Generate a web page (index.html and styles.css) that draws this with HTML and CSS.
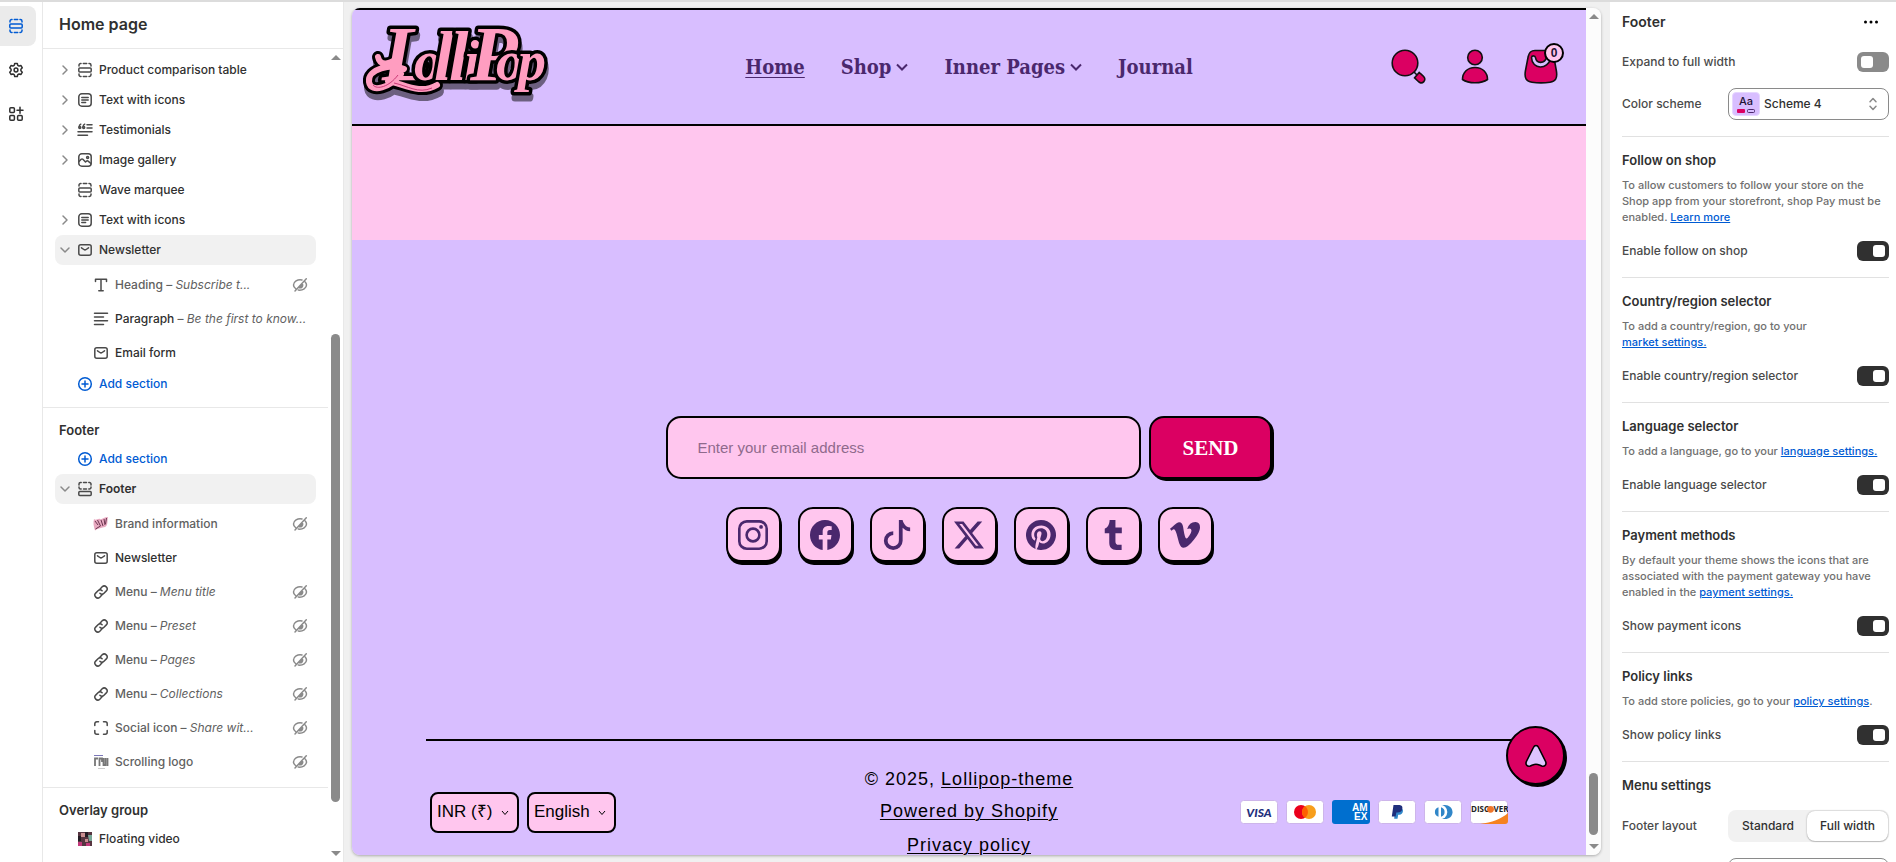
FILE: index.html
```html
<!DOCTYPE html>
<html lang="en">
<head>
<meta charset="utf-8">
<title>Home page - Theme editor</title>
<link rel="stylesheet" href="styles.css">
</head>
<body>
<svg class="sprite" aria-hidden="true">
  <symbol id="i-section" viewBox="0 0 16 16"><path d="M2 4V3.200A1.700 1.700 0 0 1 3.700 1.500H4M6.300 1.500h3.400M12 1.500h.3A1.700 1.700 0 0 1 14 3.200V4M2 12v.8a1.700 1.700 0 0 0 1.700 1.700H4M6.300 14.500h3.400M12 14.500h.3a1.700 1.700 0 0 0 1.700-1.700V12"/><rect x="1.800" y="6" width="12.400" height="4" rx="1"/></symbol>
  <symbol id="i-text" viewBox="0 0 16 16"><rect x="1.800" y="1.800" width="12.400" height="12.400" rx="3"/><path d="M4.800 5.500h6.400M4.800 8h6.400M4.800 10.500h3.800"/></symbol>
  <symbol id="i-quote" viewBox="0 0 16 16"><path d="M10 2.800h5M10 6h5M1 9.800h14M1 13.300h9.500"/><path d="M3.800 2.200c-1.200.6-1.600 1.600-1.600 2.800M7.700 2.200c-1.200.6-1.600 1.600-1.600 2.800"/><circle cx="2.800" cy="5.500" r="1"/><circle cx="6.700" cy="5.500" r="1"/></symbol>
  <symbol id="i-image" viewBox="0 0 16 16"><rect x="1.800" y="1.800" width="12.400" height="12.400" rx="3"/><path d="M2 9.500l2.200-2.200a1.200 1.200 0 0 1 1.700 0L8.500 10l1-.9a1.200 1.200 0 0 1 1.600 0l2.800 2.400"/><circle cx="10.600" cy="5.400" r="1"/></symbol>
  <symbol id="i-mail" viewBox="0 0 16 16"><rect x="1.800" y="2.800" width="12.400" height="10.400" rx="2"/><path d="M4.500 5.800l2.400 1.700a1.900 1.900 0 0 0 2.200 0l2.400-1.700"/></symbol>
  <symbol id="i-heading" viewBox="0 0 16 16"><path d="M2.500 4.500V2.300h11v2.200M8 2.500v11M5.800 13.700h4.400"/></symbol>
  <symbol id="i-para" viewBox="0 0 16 16"><path d="M1.500 2.300h13M1.500 6h9M1.500 9.800h13M1.500 13.500h9"/></symbol>
  <symbol id="i-plus" viewBox="0 0 16 16"><circle cx="8" cy="8" r="6.300"/><path d="M8 5v6M5 8h6"/></symbol>
  <symbol id="i-footer" viewBox="0 0 16 16"><path d="M2 4V3a1.500 1.500 0 0 1 1.500-1.500h.7M6.500 1.500h3M11.800 1.500h.7A1.500 1.500 0 0 1 14 3v1M2 6v.5A1.500 1.500 0 0 0 3.500 8h.7M6.500 8h3M11.800 8h.7A1.500 1.500 0 0 0 14 6.500V6"/><rect x="1.800" y="10.500" width="12.400" height="4" rx="1"/></symbol>
  <symbol id="i-link" viewBox="0 0 16 16"><path d="M6.700 5.400l2.500-2.600a2.900 2.900 0 0 1 4.100 4.100L11 9.200a2.900 2.900 0 0 1-4.100 0"/><path d="M9.300 10.600l-2.500 2.600a2.900 2.900 0 0 1-4.100-4.100L5 6.800a2.900 2.900 0 0 1 4.100 0"/></symbol>
  <symbol id="i-corners" viewBox="0 0 16 16"><path d="M1.800 5.500V3.800a2 2 0 0 1 2-2h1.700M10.500 1.800h1.700a2 2 0 0 1 2 2v1.700M14.200 10.500v1.700a2 2 0 0 1-2 2h-1.700M5.500 14.200H3.800a2 2 0 0 1-2-2v-1.700"/></symbol>
  <symbol id="i-hidden" viewBox="0 0 16 16"><path d="M10 2.900C5.500 1.800 1.500 5 1.500 8c0 1.400.8 2.600 2 3.500M14.300 1.800L3 14M13.200 5c.8.900 1.300 1.900 1.300 3 0 2.800-3.500 5.700-8.200 5.100M10.600 7.500a2.600 2.600 0 0 1-3.300 3.200z"/></symbol>
  <symbol id="i-right" viewBox="0 0 16 16"><path d="M6 4l4 4-4 4"/></symbol>
  <symbol id="i-down" viewBox="0 0 16 16"><path d="M4 6l4 4 4-4"/></symbol>
</svg>

<div class="editor">
  <nav class="rail" aria-label="Editor areas">
    <button class="rail-btn is-active" aria-label="Sections"><svg class="ic"><use href="#i-section"/></svg></button>
    <button class="rail-btn" aria-label="Theme settings"><svg class="ic" viewBox="0 0 16 16"><path d="M6.700 1.500h2.600l.5 1.900 1.300.7 1.900-.5 1.300 2.200L12.900 7.200v1.600l1.400 1.400-1.300 2.200-1.900-.5-1.300.7-.5 1.900H6.700l-.5-1.900-1.300-.7-1.900.5-1.300-2.200 1.400-1.400V7.200L1.700 5.800 3 3.600l1.900.5 1.300-.7z"/><circle cx="8" cy="8" r="1.900"/></svg></button>
    <button class="rail-btn" aria-label="App embeds"><svg class="ic" viewBox="0 0 16 16"><rect x="1.800" y="1.800" width="4.600" height="4.600" rx="1"/><rect x="1.800" y="9.600" width="4.600" height="4.600" rx="1"/><rect x="9.600" y="9.600" width="4.600" height="4.600" rx="1"/><path d="M12 1.200v6M9 4.200h6"/></svg></button>
  </nav>

  <aside class="outline">
    <h1 class="outline-title">Home page</h1>
    <div class="outline-body">
      <div class="tree">
        <section class="group">
          <button class="row"><svg class="ic chev"><use href="#i-right"/></svg><svg class="ic"><use href="#i-section"/></svg><span>Product comparison table</span></button>
          <button class="row"><svg class="ic chev"><use href="#i-right"/></svg><svg class="ic"><use href="#i-text"/></svg><span>Text with icons</span></button>
          <button class="row"><svg class="ic chev"><use href="#i-right"/></svg><svg class="ic"><use href="#i-quote"/></svg><span>Testimonials</span></button>
          <button class="row"><svg class="ic chev"><use href="#i-right"/></svg><svg class="ic"><use href="#i-image"/></svg><span>Image gallery</span></button>
          <button class="row"><span class="chev"></span><svg class="ic"><use href="#i-section"/></svg><span>Wave marquee</span></button>
          <button class="row"><svg class="ic chev"><use href="#i-right"/></svg><svg class="ic"><use href="#i-text"/></svg><span>Text with icons</span></button>
          <button class="row is-open"><svg class="ic chev"><use href="#i-down"/></svg><svg class="ic"><use href="#i-mail"/></svg><span>Newsletter</span></button>
          <div class="children">
            <button class="row child is-hidden"><svg class="ic"><use href="#i-heading"/></svg><span>Heading – <em>Subscribe t...</em></span><svg class="ic eye"><use href="#i-hidden"/></svg></button>
            <button class="row child"><svg class="ic"><use href="#i-para"/></svg><span>Paragraph <i>– <em>Be the first to know...</em></i></span></button>
            <button class="row child"><svg class="ic"><use href="#i-mail"/></svg><span>Email form</span></button>
          </div>
          <button class="row add"><span class="chev"></span><svg class="ic"><use href="#i-plus"/></svg><span>Add section</span></button>
        </section>
        <section class="group">
          <h2 class="group-title">Footer</h2>
          <button class="row add"><span class="chev"></span><svg class="ic"><use href="#i-plus"/></svg><span>Add section</span></button>
          <button class="row is-open is-current"><svg class="ic chev"><use href="#i-down"/></svg><svg class="ic"><use href="#i-footer"/></svg><span>Footer</span></button>
          <div class="children">
            <button class="row child is-hidden"><svg class="thumb-pic" viewBox="0 0 16 16"><path d="M1 3c2 2 4-1 6 0s4-2 8-2c-1 4 .500 8-3 10-3 1-7 1-10 3.500C.500 10 0 7 1 3z" fill="#e8a9c0"/><path d="M2 5l3 4M4.500 4l3 6M8 4l2 6M11 3l1 6M13.500 2l-1 6M2.500 13l5-3" stroke="#6b3550"/></svg><span>Brand information</span><svg class="ic eye"><use href="#i-hidden"/></svg></button>
            <button class="row child"><svg class="ic"><use href="#i-mail"/></svg><span>Newsletter</span></button>
            <button class="row child is-hidden"><svg class="ic"><use href="#i-link"/></svg><span>Menu – <em>Menu title</em></span><svg class="ic eye"><use href="#i-hidden"/></svg></button>
            <button class="row child is-hidden"><svg class="ic"><use href="#i-link"/></svg><span>Menu – <em>Preset</em></span><svg class="ic eye"><use href="#i-hidden"/></svg></button>
            <button class="row child is-hidden"><svg class="ic"><use href="#i-link"/></svg><span>Menu – <em>Pages</em></span><svg class="ic eye"><use href="#i-hidden"/></svg></button>
            <button class="row child is-hidden"><svg class="ic"><use href="#i-link"/></svg><span>Menu – <em>Collections</em></span><svg class="ic eye"><use href="#i-hidden"/></svg></button>
            <button class="row child is-hidden"><svg class="ic"><use href="#i-corners"/></svg><span>Social icon – <em>Share wit...</em></span><svg class="ic eye"><use href="#i-hidden"/></svg></button>
            <button class="row child is-hidden"><svg class="thumb-pic" viewBox="0 0 16 16"><path d="M1 1.500h9" stroke="#7b77b8"/><path d="M2 12V4.500h3M6.500 12V4.500H9V8M10.500 4v7h2V4M14.500 4v8" stroke="#777" stroke-width="1.800" fill="none"/><path d="M5 14.500h7" stroke="#ccc"/></svg><span>Scrolling logo</span><svg class="ic eye"><use href="#i-hidden"/></svg></button>
          </div>
        </section>
        <section class="group">
          <h2 class="group-title">Overlay group</h2>
          <button class="row"><span class="chev"></span><svg class="thumb-pic" viewBox="0 0 16 16"><path fill="#573541" d="M1 1h14v14H1z"/><path fill="#c98f91" d="M4 2h4v4H4zM8 8h3v3H8z"/><path fill="#79a899" d="M11 4h4v6h-3z"/><path fill="#c3397b" d="M1 11h4v4H1zM9 12h4v3H9z"/><path fill="#231c24" d="M1 5h3v5H1zM8 1h3v5H8z"/></svg><span>Floating video</span></button>
        </section>
      </div>
      <div class="scroll scroll-outline" aria-hidden="true"><i class="up"></i><i class="track"><b></b></i><i class="down"></i></div>
    </div>
  </aside>

  <main class="preview">
    <div class="store">
      <header class="store-head">
        <a class="logo" href="#" aria-label="LolliPop">
          <svg viewBox="0 0 184 88" role="img">
            <g class="logo-ink">
              <path class="swash-edge" d="M14 34c2 10 12 7 20 1M40 46C28 40 3 46 5 59c2 12 22 5 32-8M24 58c16 3 32 14 49 4"/>
              <text class="logo-text" y="57"><tspan class="big" x="18">L</tspan><tspan x="50">o</tspan><tspan class="tall" x="70">l</tspan><tspan class="tall" x="85">l</tspan><tspan x="100">i</tspan><tspan class="big" x="106">P</tspan><tspan x="132">o</tspan><tspan x="154">p</tspan></text>
              <path class="swash" d="M14 34c2 10 12 7 20 1M40 46C28 40 3 46 5 59c2 12 22 5 32-8M24 58c16 3 32 14 49 4"/>
              <path class="shine" d="M9 62c4 5 16 2 25-10M30 60c14 3 24 11 38 5"/>
            </g>
          </svg>
        </a>
        <nav class="store-nav">
          <a class="is-here" href="#">Home</a>
          <a href="#">Shop<svg viewBox="0 0 12 8"><path d="M1 1.500l5 5 5-5"/></svg></a>
          <a href="#">Inner Pages<svg viewBox="0 0 12 8"><path d="M1 1.500l5 5 5-5"/></svg></a>
          <a href="#">Journal</a>
        </nav>
        <div class="store-tools">
          <button aria-label="Search"><svg viewBox="0 0 36 36"><path d="M22 22l6 6" fill="none"/><circle cx="14" cy="14" r="12.800"/><path d="M23.600 28.800l4.600-5.300c1.600 1.600 4.600 3.400 5.500 5.800.8 2.600-1.700 4.800-4 4.600-2.300-.5-4.100-3.400-6.100-5.100z"/></svg></button>
          <button aria-label="Account"><svg viewBox="0 0 36 36"><circle cx="18" cy="8.500" r="7.300"/><path d="M18 18.500c8 0 12.500 5.500 12.500 12-6 4.300-19 4.300-25 0 0-6.500 4.500-12 12.500-12z"/></svg></button>
          <button class="bag" aria-label="Cart"><svg viewBox="0 0 36 36"><path d="M12 1.500h12.500c4 0 5.500 2 6.300 6l2.600 14.500c1.200 7.500-1 10.500-6.400 11.300-6 .8-12 .8-18 0-5.600-.8-7.800-3.800-6.600-11.300l2.800-14.500c.8-4 2.300-6 6.800-6z"/><path class="hole" d="M8.500 8.500c.3-2.200 3.600-2.200 4 .2 1 6.300 9.300 6.300 11-.5l4 1.300c-2.500 11.500-18.500 11.500-19-1z"/></svg><span class="count">0</span></button>
        </div>
      </header>
      <div class="band"></div>
      <footer class="store-foot">
        <form class="signup">
          <input type="email" aria-label="Email address" placeholder="Enter your email address">
          <button type="button">SEND</button>
        </form>
        <div class="social">
          <a href="#" aria-label="Instagram"><svg viewBox="0 0 16 16"><rect x=".7" y=".7" width="14.600" height="14.600" rx="4" fill="none" stroke="currentColor" stroke-width="1.400"/><circle cx="8" cy="8" r="3.400" fill="none" stroke="currentColor" stroke-width="1.400"/><circle cx="12.300" cy="3.700" r="1"/></svg></a>
          <a href="#" aria-label="Facebook"><svg viewBox="0 0 16 16"><path d="M16 8.049c0-4.446-3.582-8.050-8-8.050C3.580 0-.002 3.603-.002 8.050c0 4.017 2.926 7.347 6.750 7.951v-5.625h-2.030V8.050H6.750V6.275c0-2.017 1.195-3.131 3.022-3.131.876 0 1.791.157 1.791.157v1.980h-1.009c-.993 0-1.303.621-1.303 1.258v1.510h2.218l-.354 2.326H9.250V16c3.824-.604 6.750-3.934 6.750-7.951"/></svg></a>
          <a href="#" aria-label="TikTok"><svg viewBox="0 0 16 16"><path d="M9 0h1.980c.144.715.54 1.617 1.235 2.512C12.895 3.389 13.797 4 15 4v2c-1.753 0-3.070-.814-4-1.829V11a5 5 0 1 1-5-5v2a3 3 0 1 0 3 3z"/></svg></a>
          <a href="#" aria-label="X"><svg viewBox="0 0 16 16"><path d="M12.600.75h2.454l-5.360 6.142L16 15.250h-4.937l-3.867-5.070-4.425 5.070H.316l5.733-6.570L0 .75h5.063l3.495 4.633L12.601.75Zm-.86 13.028h1.360L4.323 2.145H2.865z"/></svg></a>
          <a href="#" aria-label="Pinterest"><svg viewBox="0 0 16 16"><path d="M8 0a8 8 0 0 0-2.915 15.452c-.07-.633-.134-1.606.027-2.297.146-.625.938-3.977.938-3.977s-.239-.479-.239-1.187c0-1.113.645-1.943 1.448-1.943.682 0 1.012.512 1.012 1.127 0 .686-.437 1.712-.663 2.663-.188.796.4 1.446 1.185 1.446 1.422 0 2.515-1.500 2.515-3.664 0-1.915-1.377-3.254-3.342-3.254-2.276 0-3.612 1.707-3.612 3.471 0 .688.265 1.425.595 1.826a.24.24 0 0 1 .056.23c-.061.252-.196.796-.222.907-.035.146-.116.177-.268.107-1-.465-1.624-1.926-1.624-3.100 0-2.523 1.834-4.840 5.286-4.840 2.775 0 4.932 1.977 4.932 4.620 0 2.757-1.739 4.976-4.151 4.976-.811 0-1.573-.421-1.834-.919l-.498 1.902c-.181.695-.669 1.566-.995 2.097A8 8 0 1 0 8 0"/></svg></a>
          <a href="#" aria-label="Tumblr"><svg viewBox="0 0 16 16"><path d="M6.200 0h3.100v4h3.400v3.100H9.300v4.300c0 1.300.6 1.800 1.700 1.800h1.600V16H9.800C7.300 16 6 14.500 6 12V7.100H3.600V4.600C5.300 4 6.100 2.200 6.200 0z"/></svg></a>
          <a href="#" aria-label="Vimeo"><svg viewBox="0 0 16 16"><path d="M15.992 4.204q-.106 2.334-3.262 6.393-3.263 4.243-5.522 4.243-1.400 0-2.367-2.583L3.550 7.523Q2.830 4.939 2.007 4.940q-.178.001-1.254.754L0 4.724a210 210 0 0 0 2.334-2.081q1.581-1.364 2.373-1.437 1.865-.185 2.298 2.553.466 2.952.646 3.666.54 2.447 1.186 2.445.5 0 1.508-1.587 1.006-1.587 1.077-2.415.144-1.370-1.077-1.370a3 3 0 0 0-1.185.261q1.183-3.860 4.508-3.756 2.466.075 2.324 3.200z"/></svg></a>
        </div>
        <div class="legal">
          <div class="locales">
            <div class="locale"><select aria-label="Currency"><option>INR (₹)</option></select><svg viewBox="0 0 8 6"><path d="M1 1l3 3.500L7 1"/></svg></div>
            <div class="locale"><select aria-label="Language"><option>English</option></select><svg viewBox="0 0 8 6"><path d="M1 1l3 3.500L7 1"/></svg></div>
          </div>
          <div class="credits">
            <p>© 2025, <a href="#">Lollipop-theme</a></p>
            <p><a href="#">Powered by Shopify</a></p>
            <p class="policy"><a href="#">Privacy policy</a></p>
          </div>
          <div class="cards">
            <svg viewBox="0 0 38 24" role="img" aria-label="Visa"><rect class="card" x=".5" y=".5" width="37" height="23" rx="3"/><text x="19" y="16.500" text-anchor="middle" class="visa">VISA</text></svg>
            <svg viewBox="0 0 38 24" role="img" aria-label="Mastercard"><rect class="card" x=".5" y=".5" width="37" height="23" rx="3"/><circle cx="15" cy="12" r="7" fill="#eb001b"/><circle cx="23" cy="12" r="7" fill="#f79e1b"/><path fill="#ff5f00" d="M19 6.300a7 7 0 0 1 0 11.400 7 7 0 0 1 0-11.400z"/></svg>
            <svg viewBox="0 0 38 24" role="img" aria-label="American Express"><rect x="0" y="0" width="38" height="24" rx="3" fill="#006fcf"/><text class="amex" x="20" y="11">AM</text><text class="amex" x="22" y="20">EX</text></svg>
            <svg viewBox="0 0 38 24" role="img" aria-label="PayPal"><rect class="card" x=".5" y=".5" width="37" height="23" rx="3"/><path fill="#3086c8" d="M17 8h6c2.500 1 2.200 3.300 1.500 4.800-.8 1.700-2.600 2-4.300 2l-.7 4h-3.300z"/><path fill="#1f2f7c" d="M15.500 5h6c2.700.2 3.200 2 2.800 4-.5 2.600-2.400 3.500-5 3.500h-1l-.7 4h-3.800z"/></svg>
            <svg viewBox="0 0 38 24" role="img" aria-label="Diners Club"><rect class="card" x=".5" y=".5" width="37" height="23" rx="3"/><path fill="#3086c8" d="M17 5h4c4 0 7.500 3 7.500 7.200S25 19 21 19h-4z"/><circle cx="16" cy="12" r="7.300" fill="#fff"/><path fill="#3086c8" d="M14.500 7.200v9.600a5 5 0 0 1 0-9.600zM17 7.200a5 5 0 0 1 0 9.600z"/></svg>
            <svg viewBox="0 0 38 24" role="img" aria-label="Discover"><rect class="card" x=".5" y=".5" width="37" height="23" rx="3"/><path fill="#f58220" d="M38 13v8a3 3 0 0 1-3 3H10c12-1.500 21-5 28-11z"/><text class="disc" x="1" y="12">DISC</text><circle cx="20.500" cy="9.300" r="3.400" fill="#f0762b"/><text class="disc" x="23.500" y="12">VER</text></svg>
          </div>
        </div>
      </footer>
      <button class="to-top" aria-label="Back to top"><svg viewBox="0 0 24 24"><path d="M12 1.500c1.300 0 2 .7 2.600 2l7 14c1.300 3-.8 5.300-3.800 4.500-2-.7-3.800-1.800-5.800-1.800S8.200 21.300 6.200 22c-3 .8-5.100-1.500-3.800-4.500l7-14c.6-1.300 1.300-2 2.600-2z"/></svg></button>
    </div>
    <div class="scroll scroll-store" aria-hidden="true"><i class="up"></i><i class="track"><b></b></i><i class="down"></i></div>
  </main>

  <aside class="settings">
    <header class="settings-head"><h2>Footer</h2><button aria-label="More actions"><svg viewBox="0 0 16 4"><circle cx="2.500" cy="2" r="1.500"/><circle cx="8" cy="2" r="1.500"/><circle cx="13.500" cy="2" r="1.500"/></svg></button></header>
    <section>
      <div class="field"><label for="expand">Expand to full width</label><input class="toggle" type="checkbox" id="expand"></div>
      <div class="field"><label for="scheme">Color scheme</label>
        <div class="picker"><select id="scheme"><option>Scheme 4</option></select>
          <span class="swatch">Aa<svg viewBox="0 0 18 4"><rect width="8" height="4" rx="1" fill="#db0062"/><rect x="10.500" y=".5" width="7" height="3" rx="1" fill="none" stroke="#4a286d"/></svg></span>
          <svg class="sorter" viewBox="0 0 10 14"><path d="M2 4.800l3-3.200 3 3.200M2 9.200l3 3.200 3-3.200"/></svg></div></div>
    </section>
    <section>
      <h3>Follow on shop</h3>
      <p>To allow customers to follow your store on the Shop app from your storefront, shop Pay must be enabled. <a href="#">Learn more</a></p>
      <div class="field"><label for="follow">Enable follow on shop</label><input class="toggle" type="checkbox" id="follow" checked></div>
    </section>
    <section>
      <h3>Country/region selector</h3>
      <p>To add a country/region, go to your <br><a href="#">market settings.</a></p>
      <div class="field"><label for="country">Enable country/region selector</label><input class="toggle" type="checkbox" id="country" checked></div>
    </section>
    <section>
      <h3>Language selector</h3>
      <p>To add a language, go to your <a href="#">language settings.</a></p>
      <div class="field"><label for="language">Enable language selector</label><input class="toggle" type="checkbox" id="language" checked></div>
    </section>
    <section>
      <h3>Payment methods</h3>
      <p>By default your theme shows the icons that are associated with the payment gateway you have enabled in the <a href="#">payment settings.</a></p>
      <div class="field"><label for="payment">Show payment icons</label><input class="toggle" type="checkbox" id="payment" checked></div>
    </section>
    <section>
      <h3>Policy links</h3>
      <p>To add store policies, go to your <a href="#">policy settings</a>.</p>
      <div class="field"><label for="policy">Show policy links</label><input class="toggle" type="checkbox" id="policy" checked></div>
    </section>
    <section>
      <h3>Menu settings</h3>
      <div class="field"><span>Footer layout</span>
        <div class="segment" role="radiogroup" aria-label="Footer layout">
          <label><input type="radio" name="layout"><span>Standard</span></label>
          <label><input type="radio" name="layout" checked><span>Full width</span></label>
        </div></div>
      <div class="field"><span></span><div class="picker"><select aria-label="Menu"><option></option></select></div></div>
    </section>
  </aside>
</div>
</body>
</html>
```

FILE: styles.css
```css
* { box-sizing: border-box; }

body {
  margin: 0;
  font: 450 12px/20px Inter, "Liberation Sans", sans-serif;
  color: #303030;
  background: #f0f0f0;
}

h1, h2, h3, p { margin: 0; }

button, input, select {
  font: inherit;
  color: inherit;
  margin: 0;
}

button {
  background: none;
  border: 0;
  padding: 0;
  display: flex;
  align-items: center;
}

svg { display: block; flex: none; }

.sprite { position: absolute; width: 0; height: 0; }

.ic {
  width: 16px;
  height: 16px;
  fill: none;
  stroke: currentColor;
  stroke-width: 1.5;
  stroke-linecap: round;
  stroke-linejoin: round;
}

.editor {
  display: grid;
  grid-template-columns: 43px 301px 1fr 286px;
  height: 100vh;
  overflow: hidden;
  border-top: 2px solid #dcdcdc;
}

/* Icon rail */
.rail {
  display: flex;
  flex-direction: column;
  gap: 4px;
  padding: 4px 6px 0 0;
  background: #fff;
  border-right: 1px solid #e8e8e8;
}

.rail-btn {
  height: 40px;
  padding-left: 8px;
  border-radius: 0 8px 8px 0;
}

.rail-btn.is-active { background: #ebebeb; color: #005bd3; }

/* Section outline */
.outline {
  display: flex;
  flex-direction: column;
  min-height: 0;
  background: #fff;
  border-right: 1px solid #e8e8e8;
}

.outline-title {
  padding: 12px 16px 14px;
  font-size: 16px;
  font-weight: 600;
  border-bottom: 1px solid #e8e8e8;
}

.outline-body {
  display: flex;
  flex: 1;
  min-height: 0;
}

.tree { flex: 1; padding-top: 6px; overflow: hidden; }

.group { padding: 0 12px 8px; }

.group + .group { border-top: 1px solid #e8e8e8; padding-top: 8px; }

.group-title {
  padding-left: 4px;
  font-size: 13px;
  font-weight: 600;
  line-height: 28px;
}

.row {
  width: 100%;
  height: 30px;
  gap: 6px;
  border-radius: 8px;
  white-space: nowrap;
  text-align: left;
}

.row .ic { color: #4a4a4a; }
.row .chev { width: 16px; flex: none; color: #8a8a8a; margin-left: 2px; margin-right: -2px; }
.row.is-open { background: #f1f1f1; }
.row.is-current { font-weight: 600; }
.row.add, .row.add .ic { color: #005bd3; }

.children { padding-top: 3px; }
.children:not(:last-child) { margin-bottom: -1px; }

.row.child { height: 34px; padding: 0 8px 0 38px; }
.row i { font-style: normal; color: #616161; }
.row.is-hidden { color: #616161; }
.row .eye { margin-left: auto; color: #8a8a8a; }

.thumb-pic { width: 16px; height: 16px; fill: none; }

/* Scrollbars */
.scroll {
  display: flex;
  flex-direction: column;
  align-items: center;
  flex: none;
  width: 15px;
  gap: 5px;
  padding: 6px 0;
}

.up, .down { border: 5px solid transparent; }
.up { border-top: 0; border-bottom-color: #8a8a8a; }
.down { border-bottom: 0; border-top-color: #8a8a8a; }

.track { display: flex; flex-direction: column; flex: 1; }
.track::before, .track::after { content: ""; }
.track b { width: 9px; border-radius: 5px; background: #8a8a8a; }
.scroll-outline .track::before { flex: 269; }
.scroll-outline .track b { flex: 468; }
.scroll-outline .track::after { flex: 44; }
.scroll-store { background: #fcfcfc; }
.scroll-store .track::before { flex: 749; }
.scroll-store .track b { flex: 62; }
.scroll-store .track::after { flex: 4; }

/* Storefront preview */
.preview {
  display: flex;
  min-width: 0;
  min-height: 0;
  margin: 6px 9px 7px 8px;
  border-radius: 8px;
  overflow: hidden;
  box-shadow: 0 1px 3px rgba(0, 0, 0, .3);
}

.store {
  position: relative;
  flex: 1;
  overflow: hidden;
  background: #d8beff;
  color: #000;
  font: 400 17px/32px "Liberation Sans", Arial, sans-serif;
}

.store a { color: inherit; }

.store-head {
  display: grid;
  grid-template-columns: 1fr auto 1fr;
  align-items: center;
  height: 118px;
  padding: 0 12px;
  border: solid #000;
  border-width: 2px 0;
  color: #4a286d;
}

.logo svg { width: 184px; height: 88px; overflow: visible; }
.logo-ink { filter: drop-shadow(1px 6px 0 rgba(0, 0, 0, .5)); }
.logo-text {
  font: italic 700 56px "Liberation Serif", serif;
  fill: #ff9dc0;
  stroke: #000;
  stroke-width: 7px;
  stroke-linejoin: round;
  paint-order: stroke;
}
.logo-text .big { font-size: 78px; }
.logo-text .tall { font-size: 70px; }
.swash-edge, .swash { fill: none; stroke-linecap: round; stroke: #000; stroke-width: 12; }
.swash { stroke: #ff9dc0; stroke-width: 6; }
.shine { fill: none; stroke: #c93a76; stroke-width: 1; }

.store-nav {
  display: flex;
  gap: 36px;
  font: 700 20px/28px "DejaVu Serif Condensed", "DejaVu Serif", serif;
}

.store-nav a { display: flex; align-items: center; gap: 5px; text-decoration: none; }
.store-nav a.is-here { text-decoration: underline; text-underline-offset: 3px; text-decoration-thickness: 1px; }
.store-nav svg { width: 12px; height: 8px; fill: none; stroke: currentColor; stroke-width: 2; }

.store-tools { display: flex; justify-content: flex-end; gap: 30px; padding-right: 15px; }
.store-tools svg { width: 36px; height: 36px; fill: #db0062; stroke: #111; stroke-width: 1.6; }
.store-tools .hole { fill: #d8beff; }
.bag { position: relative; }
.count {
  position: absolute;
  top: -6px;
  right: -5px;
  width: 20px;
  height: 20px;
  border: 2px solid #000;
  border-radius: 50%;
  background: #ffc6ee;
  font: 700 12px/16px "Liberation Sans", sans-serif;
  text-align: center;
  color: #1d1233;
}

.band { height: 114px; background: #ffc6ee; }

.store-foot { padding: 176px 74px 0; }

.signup { display: flex; justify-content: center; gap: 8px; }
.signup input {
  width: 475px;
  height: 63px;
  padding: 0 29px;
  border: 2px solid #000;
  border-radius: 15px;
  background: #ffc6ee;
  font-size: 15px;
}
.signup input::placeholder { color: #8f6a8c; opacity: 1; }
.signup button {
  height: 63px;
  padding: 0 31px;
  border: 2px solid #000;
  border-radius: 15px;
  background: #db0062;
  box-shadow: 2px 2px 0 #000;
  color: #fff;
  font: 700 21px/28px "Liberation Serif", serif;
}

.social { display: flex; justify-content: center; gap: 17px; margin-top: 28px; }
.social a {
  display: grid;
  place-items: center;
  width: 55px;
  height: 55px;
  border: 2px solid #000;
  border-radius: 15px;
  background: #ffc6ee;
  box-shadow: 1px 3px 0 #000;
  color: #4a286d;
}
.social svg { width: 30px; height: 30px; fill: currentColor; }

.legal {
  display: grid;
  grid-template-columns: 1fr auto 1fr;
  align-items: center;
  margin-top: 177px;
  padding: 22px 4px 0;
  border-top: 2px solid #000;
}

.locales { display: flex; gap: 8px; }
.locale { position: relative; }
.locale select {
  width: 89px;
  height: 41px;
  padding: 0 5px;
  border: 2px solid #000;
  border-radius: 8px;
  background: #ffc6ee;
  appearance: none;
}
.locale svg {
  position: absolute;
  right: 10px;
  top: 18px;
  width: 8px;
  height: 6px;
  fill: none;
  stroke: #000;
  pointer-events: none;
}

.credits { font-size: 18px; letter-spacing: 1px; text-align: center; }
.credits a { text-underline-offset: 2px; text-decoration-thickness: 1px; }
.credits .policy { margin-top: 2px; }

.cards { display: flex; justify-content: flex-end; gap: 8px; }
.cards svg { width: 38px; height: 24px; }
.card { fill: #fff; stroke: #cdb5ea; }
.visa { font: italic 900 12px Lato, sans-serif; fill: #1f2f7c; }
.amex { font: 700 10px "Liberation Sans", sans-serif; fill: #fff; }
.disc { font: 700 8px "Open Sans", sans-serif; fill: #222; }

.to-top {
  position: absolute;
  right: 21px;
  bottom: 70px;
  justify-content: center;
  width: 59px;
  height: 59px;
  border: 2px solid #000;
  border-radius: 50%;
  background: #db0062;
  box-shadow: 2px 2px 0 #000;
}
.to-top svg { width: 24px; height: 24px; fill: #ddc4ff; stroke: #000; stroke-width: 1.6; }

/* Settings */
.settings {
  padding: 0 7px 0 12px;
  background: #fff;
  overflow: hidden;
}

.settings-head {
  display: flex;
  align-items: center;
  justify-content: space-between;
  height: 40px;
  padding-right: 10px;
}
.settings-head h2 { font-size: 14px; font-weight: 600; }
.settings-head svg { width: 16px; height: 4px; }

.settings section { padding: 14px 0 16px; }
.settings section:first-of-type { padding-top: 10px; }
.settings section + section { border-top: 1px solid #e1e1e1; }
.settings h3 { font-size: 13px; font-weight: 600; line-height: 18px; }
.settings p { margin-top: 8px; font-size: 11px; line-height: 16px; color: #707070; }
.settings a { color: #005bd3; }

.field {
  display: flex;
  align-items: center;
  justify-content: space-between;
  color: #4a4a4a;
}
.field + .field, h3 + .field, p + .field { margin-top: 16px; }

.toggle {
  appearance: none;
  width: 32px;
  height: 20px;
  padding: 4px;
  border-radius: 6px;
  background: #8a8a8a;
}
.toggle::before {
  content: "";
  display: block;
  width: 12px;
  height: 12px;
  border-radius: 3px;
  background: #fff;
}
.toggle:checked { background: #303030; }
.toggle:checked::before { margin-left: 12px; }

.picker { position: relative; width: 161px; }
.picker select {
  display: block;
  width: 100%;
  height: 32px;
  padding: 0 28px 0 35px;
  border: 1px solid #8a8a8a;
  border-radius: 8px;
  background: #fff;
  color: #303030;
  appearance: none;
}
.swatch {
  position: absolute;
  left: 4px;
  top: 4px;
  width: 28px;
  height: 24px;
  padding: 2px 5px;
  border: 1px solid #e6d6ff;
  border-radius: 4px;
  background: #d8beff;
  color: #1d1233;
  font-size: 11px;
  font-weight: 500;
  line-height: 13px;
  text-align: center;
  pointer-events: none;
}
.swatch svg { width: 18px; height: 4px; margin: 1px -1px; }
.sorter {
  position: absolute;
  right: 11px;
  top: 9px;
  width: 10px;
  height: 14px;
  fill: none;
  stroke: #8a8a8a;
  stroke-width: 1.5;
  stroke-linecap: round;
  stroke-linejoin: round;
  pointer-events: none;
}

.segment {
  display: flex;
  width: 161px;
  height: 32px;
  padding: 1px;
  border-radius: 8px;
  background: #f1f1f1;
  color: #303030;
  font-weight: 500;
}
.segment label { display: grid; flex: 1 1 auto; }
.segment input { position: absolute; opacity: 0; }
.segment span { padding: 0 8px; border-radius: 8px; line-height: 30px; text-align: center; white-space: nowrap; }
.segment input:checked + span { background: #fff; box-shadow: 0 0 2px rgba(0, 0, 0, .3), 0 1px 1px rgba(0, 0, 0, .15); }
```
